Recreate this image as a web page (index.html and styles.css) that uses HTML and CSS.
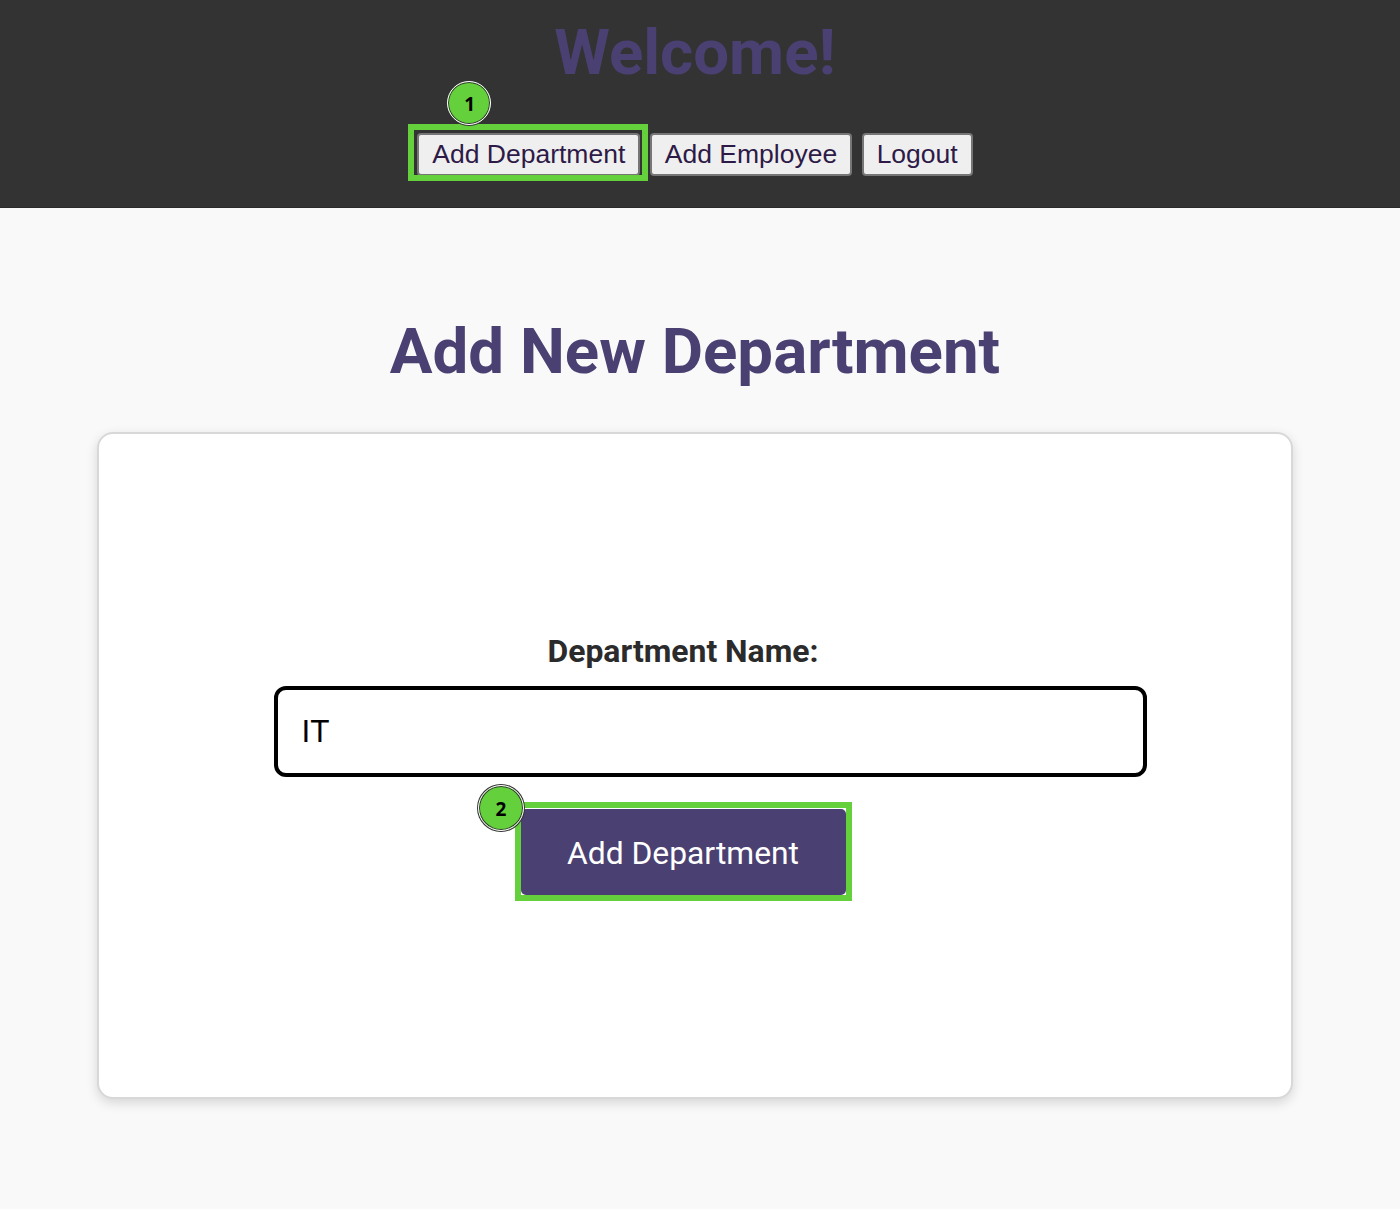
FILE: index.html
```html
<!DOCTYPE html>
<html lang="en">
<head>
<meta charset="utf-8">
<title>Add New Department</title>
<link rel="stylesheet" href="styles.css">
</head>
<body>
<header class="site-header">
  <h1 class="welcome">Welcome!</h1>
  <nav class="nav">
    <span class="marked">
      <button class="nav-btn" type="button">Add Department</button>
      <span class="mark mark-nav"></span>
      <span class="badge badge-nav">1</span>
    </span>
    <button class="nav-btn" type="button">Add Employee</button>
    <button class="nav-btn" type="button">Logout</button>
  </nav>
</header>
<main class="content">
  <h2 class="page-title">Add New Department</h2>
  <section class="card">
    <form class="form">
      <label class="field-label" for="dept">Department Name:</label>
      <input class="field-input" id="dept" type="text" value="IT">
      <span class="marked marked-submit">
        <button class="submit-btn" type="button">Add Department</button>
        <span class="mark mark-submit"></span>
        <span class="badge badge-submit">2</span>
      </span>
    </form>
  </section>
</main>
</body>
</html>
```
FILE: styles.css
```css
* { box-sizing: border-box; }
html, body { margin: 0; padding: 0; }
body {
  width: 1400px;
  height: 1209px;
  overflow: hidden;
  background: #f9f9f9;
  font-family: "Roboto", "Liberation Sans", sans-serif;
}
.site-header {
  height: 208px;
  background: #333333;
  border-bottom: 1px solid #2a2a2a;
  padding: 17px 10px 0 0;
  display: flex;
  flex-direction: column;
  align-items: center;
}
.welcome {
  margin: 0;
  font-size: 63.6px;
  line-height: 72px;
  font-weight: 700;
  color: #4a4072;
}
.nav {
  margin-top: 44px;
  display: flex;
  gap: 9.5px;
}
.nav-btn {
  height: 43px;
  padding: 0 13px;
  background: #efefef;
  border: 2px solid #767676;
  border-radius: 4px;
  color: #2e1a47;
  font-family: "Liberation Sans", Arial, sans-serif;
  font-size: 26.5px;
  white-space: nowrap;
}
.marked {
  position: relative;
  display: block;
}
.mark {
  position: absolute;
  border: 6px solid #63d03c;
  pointer-events: none;
}
.mark-nav { left: -9.5px; top: -9px; right: -8px; bottom: -5px; }
.mark-submit { left: -6px; top: -7px; right: -6px; bottom: -6px; }
.badge {
  position: absolute;
  width: 46px;
  height: 46px;
  padding: 2px 0 0 1px;
  display: flex;
  align-items: center;
  justify-content: center;
  border-radius: 50%;
  background: #63d03c;
  border: 1px solid #fff;
  box-shadow: inset 0 0 0 1px #333, 0 0 0 1px #333;
  color: #000;
  font-family: "Open Sans", "Noto Sans", sans-serif;
  font-weight: 700;
  font-size: 19px;
}
.badge-nav { left: 30px; top: -52px; width: 44px; height: 44px; }
.badge-submit { left: -43px; top: -24px; }
.content {
  width: 1390px;
  padding-top: 108px;
  display: flex;
  flex-direction: column;
  align-items: center;
}
.page-title {
  margin: 0;
  font-size: 63.6px;
  line-height: 72px;
  font-weight: 700;
  color: #4a4072;
}
.card {
  margin-top: 44px;
  width: 1196px;
  height: 667px;
  background: #fff;
  border: 2px solid #d8d8d8;
  border-radius: 16px;
  box-shadow: 0 4px 12px rgba(0, 0, 0, 0.14);
  padding-top: 197px;
}
.form {
  width: 1168px;
  display: flex;
  flex-direction: column;
  align-items: center;
}
.field-label {
  font-size: 31.9px;
  line-height: 40px;
  font-weight: 700;
  color: #2b2b2b;
}
.field-input {
  margin-top: 15px;
  margin-left: 54px;
  width: 873px;
  height: 91px;
  border: 4px solid #000;
  border-radius: 12px;
  padding: 0 24px;
  background: #fff;
  color: #000;
  font-family: "Liberation Sans", Arial, sans-serif;
  font-size: 31.5px;
}
.marked-submit { margin-top: 32px; }
.submit-btn {
  display: block;
  width: 325px;
  height: 86px;
  padding: 2px 0 0;
  background: #4a4072;
  border: 0;
  border-radius: 5px;
  color: #fff;
  font-family: "Roboto", sans-serif;
  font-size: 31.8px;
}
```
